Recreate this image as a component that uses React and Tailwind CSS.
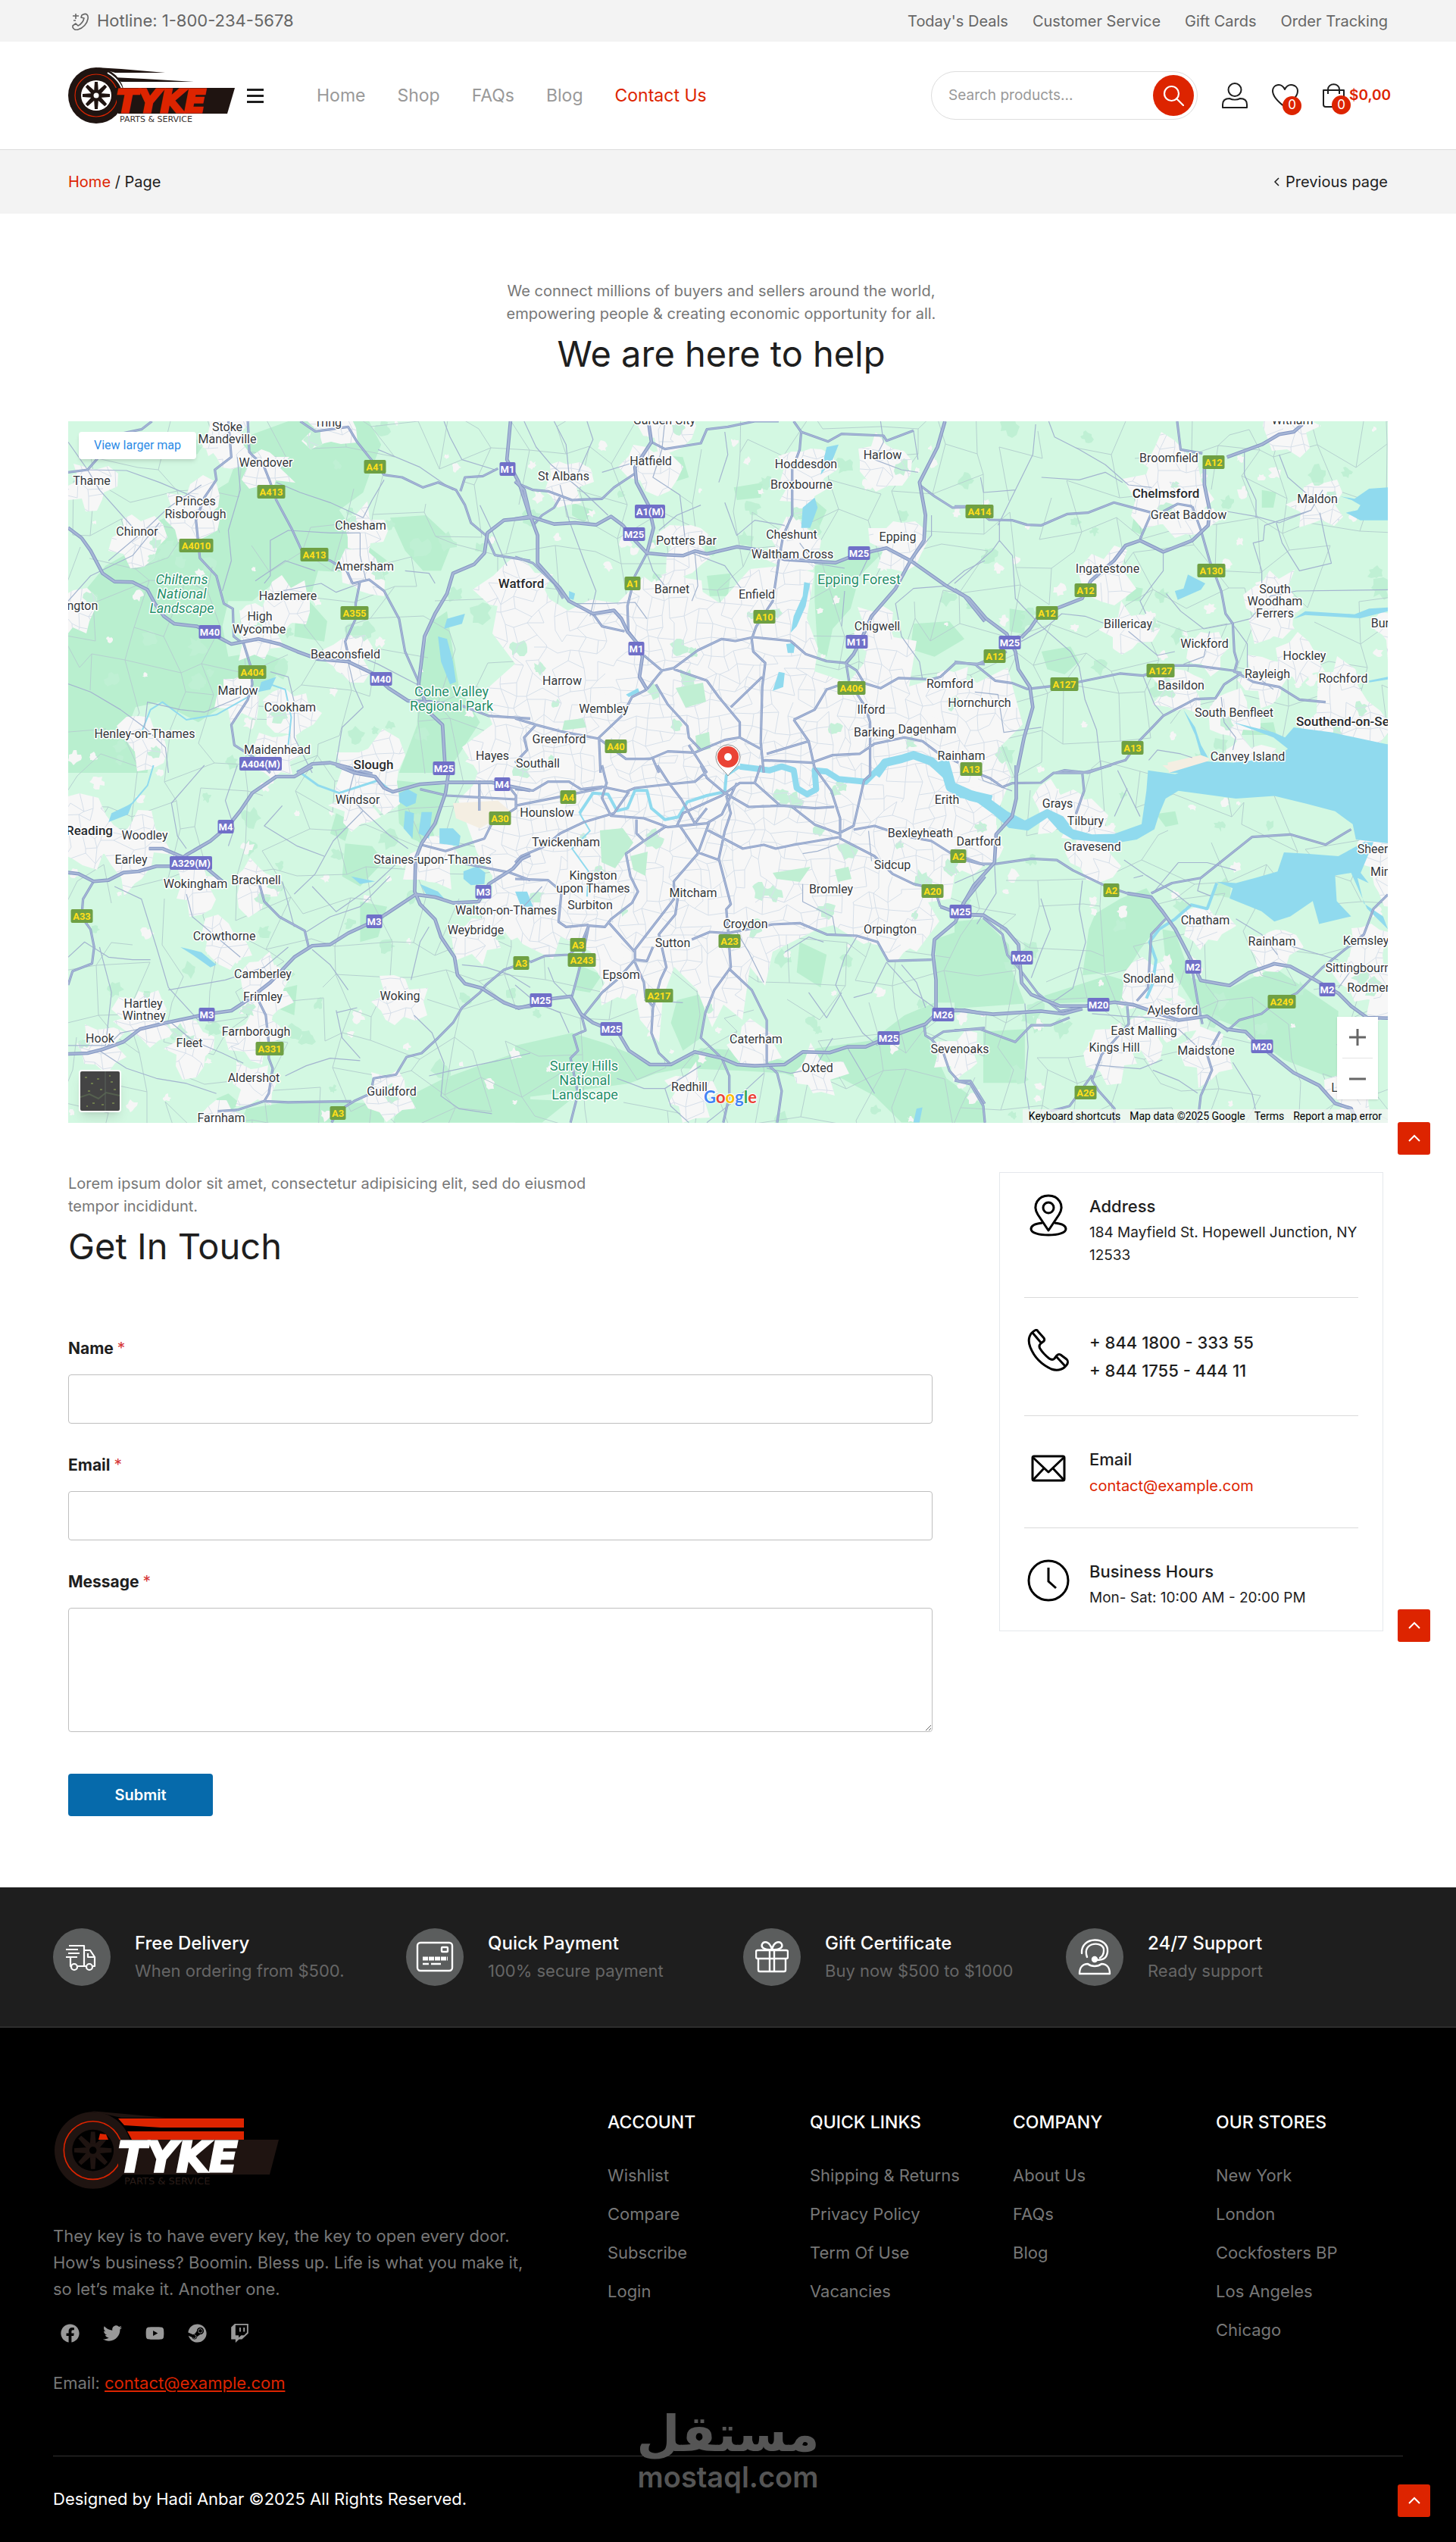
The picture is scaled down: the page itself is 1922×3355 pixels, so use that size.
import { Fragment } from "react";
import { FaFacebook, FaTwitter, FaYoutube, FaSteam, FaTwitch } from "react-icons/fa";

const topLinks = ["Today's Deals", "Customer Service", "Gift Cards", "Order Tracking"];
const navLinks = ["Home", "Shop", "FAQs", "Blog", "Contact Us"];

const footerColumns = [
  { title: "ACCOUNT", links: ["Wishlist", "Compare", "Subscribe", "Login"] },
  { title: "QUICK LINKS", links: ["Shipping & Returns", "Privacy Policy", "Term Of Use", "Vacancies"] },
  { title: "COMPANY", links: ["About Us", "FAQs", "Blog"] },
  { title: "OUR STORES", links: ["New York", "London", "Cockfosters BP", "Los Angeles", "Chicago"] },
];

const socials = [
  ["Facebook", FaFacebook],
  ["Twitter", FaTwitter],
  ["YouTube", FaYoutube],
  ["Steam", FaSteam],
  ["Twitch", FaTwitch],
];

/* ---------- map data ---------- */

// every tile has its own origin and units, the map itself is 1742 x 926
const tiles = {
  a: { x: -10, y: -16, sx: 0.3954, sy: 0.3333 },
  b: { x: 590, y: -16, sx: 0.3954, sy: 0.3333 },
  c: { x: 1170, y: -16, sx: 0.3827, sy: 0.3333 },
  d: { x: -10, y: 454, sx: 0.3954, sy: 0.3333 },
  e: { x: 590, y: 454, sx: 0.3954, sy: 0.3333 },
  f: { x: 1170, y: 454, sx: 0.4222, sy: 0.3381 },
};

const hills = {
  a: "M330,440L420,390L560,290L600,160L640,100L760,48L1030,48L1070,140L1040,230L1010,330L930,400L1000,520L1090,600L1000,650L860,640L830,760L890,840L880,920L780,900L790,720L700,700L640,760L560,760L540,860L560,980L660,960L760,1000L700,1080L560,1160L460,1240L330,1160L250,1180L230,1240L250,1320L130,1290L25,1340V800L150,620L240,560ZM1100,430L1220,420L1310,520L1270,640L1210,640L1150,560ZM1240,840L1290,800L1310,960L1330,1100L1400,1240L1290,1440H1130L1190,1250L1200,1000ZM25,1250L160,1300L300,1330L290,1440H25Z",
  b: "M1000,620L1190,570L1230,565L1150,660L1120,790L1060,870L1040,980L1010,960L1000,760ZM980,340L1040,400L1010,480L960,480ZM460,180L560,190L580,270L500,300ZM1330,850L1450,840L1500,910L1400,980L1320,950ZM730,310L830,290L820,350L740,360ZM640,660L720,650L710,740L650,740ZM190,370L260,400L230,450L190,420ZM540,1120L620,1110L640,1170L570,1180Z",
  c: "M620,420L680,430L650,500L610,480ZM190,790L250,800L240,890L190,880ZM1060,320L1110,330L1100,390L1060,390ZM300,960L400,940L430,1000L380,1050L320,1030ZM600,700L650,710L640,760L590,760ZM960,1250L1100,1240L1110,1290L990,1290Z",
  d: "M1120,60L1290,80L1260,230L1210,320L1130,230ZM950,310L1040,320L1080,380L1000,480L940,440ZM920,190L970,220L950,300L900,270ZM1000,540L1090,560L1060,680L1000,700ZM1110,1415L1130,1330L1280,1240L1420,1180L1568,1120V1415ZM620,1360L780,1330L1080,1340V1415H600ZM720,890L790,870L780,990L720,960ZM520,1320L560,1300L600,1340L540,1390ZM1160,190L1220,170L1260,330L1170,290Z",
  e: "M0,1110L190,1060L300,1100L380,1140L450,1190L560,1170L620,1120L760,1130L900,1170L1010,1120L1190,1090L1300,990L1400,940L1370,1060L1440,1240L1568,1350V1415H1290L1200,1310L1090,1240L990,1260L900,1220L760,1210L560,1200L470,1220L380,1260L200,1290L0,1320ZM1400,690L1568,620V940L1410,940ZM280,260L350,250L390,300L330,400L290,380ZM385,360L440,340L430,430L395,410ZM210,790L290,830L250,900L200,890ZM540,930L640,900L620,1080L560,1130L520,1020ZM950,700L1040,750L1020,880L940,820ZM0,1320L180,1330L90,1415H0ZM630,560L680,580L670,660L630,650Z",
  f: "M0,610L90,600L170,700L180,800L220,930L0,950ZM440,580L520,520L600,480L660,590L580,720L540,800L400,820L420,640ZM650,640L690,650L740,830L860,870L1000,790L1200,960L1195,1230L1030,1150L900,1030L760,960L660,760ZM90,1040L220,1030V1240L90,1240ZM280,900L480,820L560,850L560,920L300,930ZM630,190L690,180L700,230L660,240ZM0,40L60,30L110,80L90,130L0,90Z",
};

const water = {
  a: "M1290,830L1350,810L1340,850L1280,870ZM1260,900L1290,910L1310,1000L1320,1080L1300,1090L1270,1000ZM670,1080L720,1060L700,1110L660,1120Z",
  b: "M965,685L985,690L970,780L940,860L920,885L930,820L960,740ZM960,390L1000,350L1010,390L985,470L955,470ZM880,1040L900,1045L895,1100L860,1115ZM905,930L935,925L930,965L910,965ZM1040,150L1080,140L1060,200L1020,260L1030,200ZM180,720L200,730L195,755L180,750ZM370,1130L410,1105L415,1120L380,1140Z",
  c: "M1330,345L1380,355L1430,315L1495,310V440H1400L1350,410L1390,400L1400,380L1370,360ZM1170,830L1210,800L1380,812L1430,790L1495,785V800L1400,828L1210,815ZM805,655L865,690L850,715L770,755L760,720L790,710ZM1170,1260L1300,1280L1495,1328V1440H740L870,1395L960,1400L1110,1380L1150,1345L1100,1300L960,1240L1100,1280L1140,1300ZM1430,1075L1495,1060V1070L1430,1082ZM790,1190L830,1260L850,1330L875,1380L850,1370L830,1290Z",
  d: "M1130,110L1160,95L1190,115L1185,150L1155,165L1130,145ZM1205,185L1240,185L1230,290L1195,270ZM1150,180L1180,190L1175,290L1145,250ZM1265,250L1310,250L1335,280L1330,320L1265,310ZM1345,420L1390,400L1418,425L1415,470L1370,475L1345,450ZM170,190L240,150L225,195L160,225ZM400,720L470,740L520,790L500,800L440,750ZM1200,470L1260,500L1290,540L1220,510ZM970,440L1050,460L1000,470Z",
  e: "M0,500L40,500L50,530L60,560L20,560ZM1340,1360L1360,1355L1350,1415H1330Z",
  f: "M605,20L690,35L760,0H1355V305L1255,290L1245,230L1190,180L1100,150L1000,120L880,130L810,118L700,100L660,130L640,190L625,250L570,290L500,305L370,290L330,260L290,205L230,255L170,245L120,190L60,135L0,125V92L60,100L110,130L165,180L220,215L290,170L340,200L370,250L430,270L500,268L585,230L600,100ZM820,455L880,460L940,440L1010,415L1030,340L1100,345L1200,355L1280,300H1310L1270,420L1295,460L1260,440L1280,540L1340,590L1355,640L1290,560L1240,420L1190,430L1195,530L1240,590L1140,620L1120,530L1050,590L1000,610L960,570L860,520L870,480Z",
};

const rivers = {
  a: [["M270,1280L300,1190L340,1160L420,1230L520,1210L640,1130L700,1090L750,1110L770,1220L760,1330", 2]],
  d: [["M790,20L860,80L930,110L1060,60L1110,110", 3], ["M170,210L240,150L290,80L310,0", 2]],
  e: [
    ["M215,190L260,110L310,115L340,180L375,170L400,100L440,100L455,170L500,215L545,205L575,145L640,120L700,105L705,40L750,5", 4],
    ["M215,190L250,260L190,330L245,420L240,520", 2],
    ["M750,5L850,20L890,5L930,20L940,90L975,115L1005,95L1000,20L1040,25L1080,55L1170,65L1225,0", 8],
    ["M1430,-20L1455,85L1520,120L1590,140", 14],
  ],
  b: [["M1205,1450L1235,1400L1290,1385L1330,1370L1390,1395L1440,1450", 11]],
  f: [["M820,460L790,560L740,545L690,600L640,640L610,690L630,760L620,850L600,910", 4]],
};

const sand = {
  c: "M735,1400L850,1370L880,1385L860,1410L800,1440H740Z",
  d: "M1310,150L1460,140L1500,180L1400,250L1320,210Z",
  f: "M650,0H760L720,28L670,20Z",
};

const motorways = {
  a: "M25,470L70,510L100,560L140,650L180,683L240,685L290,715L315,770L345,820L380,850L455,860L530,905L570,930L660,910L730,930L790,960L860,990L960,1000L1040,1045L1095,1105L1160,1155L1240,1160M1502,48L1490,200L1530,290L1560,400L1568,430L1480,440L1425,490L1415,570L1380,615L1310,650L1290,730L1250,810L1215,900L1195,1090L1230,1200L1275,1250L1285,1440M790,1440L840,1405L900,1400L980,1425L1040,1445",
  b: "M0,285L30,320L50,420L75,500L75,610L150,710L180,760L260,810L330,797L355,830L375,880L410,930L425,980L415,1060L440,1110M0,435L50,425L130,455L200,450L270,458L320,425L360,460L400,520L440,570L500,577L560,580L600,562L640,573L740,545L800,555L900,595L1070,608L1130,580L1240,550L1320,600L1440,700L1500,740L1568,840M445,48L455,130L400,230L405,290L445,380L462,470L440,570M1435,48L1410,150L1350,290L1370,420L1365,520L1320,600L1270,710L1190,820L1160,900L1130,970L1105,1005",
  c: "M0,715L50,750L110,830L180,890L210,960L220,1030L260,1100L270,1180L240,1300L215,1440M1200,60L1170,90L1120,100L1060,140L940,190M862,230L862,300L880,400L875,460L820,520L720,565L640,520L590,540L550,600L470,680L440,750L350,790L290,820L260,870L230,905",
  d: "M25,425L60,430L110,460L160,455L210,425L260,420L320,400L370,400L420,355L500,300L560,240L600,180L640,110L720,45L780,45L840,5M920,0L980,30L1050,45L1080,90L1110,105L1200,75L1290,68L1440,68L1568,100M25,1143L90,1140L140,1125L210,1095L265,1045L350,1020L490,985L570,972L630,925L700,860L780,760L840,715L900,710L960,665L1060,610L1130,555L1185,512L1250,522L1310,545L1395,540L1430,470L1510,410L1540,370L1568,355M1295,30L1285,110L1250,230L1205,310L1185,370L1182,500L1200,550L1250,610L1270,680L1315,760L1325,830L1350,865L1405,882L1480,940L1530,962L1568,950M295,330L340,330L400,360L480,400L540,460",
  e: "M0,960L50,955L120,925L185,915L220,985L260,1020L345,1060L380,1130L450,1185L520,1185L600,1135L690,1160L740,1185L800,1190L900,1185L960,1135L1050,1138L1110,1115L1170,1115L1240,1080L1310,1050L1370,1025L1405,985L1405,850L1395,750L1400,690L1470,620L1500,540L1568,440M1400,975L1500,970L1568,985M1420,560L1490,590L1568,595",
  f: "M193,0L193,130L180,200L130,270L125,380L60,470L0,600M540,500L615,515L650,570L690,640L740,760L770,840L860,860L920,810L1000,775L1050,785L1130,840L1200,890L1240,940L1290,985L1355,987M0,580L90,585L160,640L200,700L210,850L240,895L330,940L410,940L500,925L560,935L640,970L700,995L790,980L850,1030L910,1040L950,1090L1060,1200L1140,1250L1190,1320L1240,1340L1260,1395M0,955L120,972L270,960L340,970L400,950",
};

const mainRoads = {
  a: "M800,48L850,88L960,70L990,130L1030,190L1080,260L1140,270L1210,310L1260,290L1320,320L1350,380L1370,450L1420,500L1450,578L1568,600M625,48L630,170L680,230L700,290L720,360L770,470L805,560L900,600L955,640L975,690L1030,675L1080,720L1130,830L1150,960L1195,1080M560,48L570,190L515,240L520,280L480,350L452,440L465,590L520,660L545,770L575,790L578,900L600,920M610,925L635,1020L640,1090L625,1150L570,1250L580,1330L640,1375L700,1440M1000,680L985,770L985,830L950,920L965,1000M305,48L270,80L190,100L120,200L90,240L25,250M1240,1160L1330,1170L1430,1215L1568,1225M1335,325L1350,270L1410,265L1460,235",
  b: "M0,290L60,320L110,325L190,360L290,355L330,310L400,255M455,130L500,158L620,135L640,80L710,70L800,48L880,48M930,48L955,90L1045,128L1090,98L1230,105L1240,125L1330,85M955,90L950,160L925,240L925,420L895,500L880,600L860,760L805,860L790,910L795,960L835,1005L825,1100L820,1320L830,1440M440,570L400,660L375,780L378,880L410,930M1350,300L1400,345L1460,390L1568,385M440,1110L490,1035L530,1025L610,955L690,910L735,918L795,903L920,918L970,970L1040,998L1100,1005L1140,1035L1165,1085L1220,1105L1280,1065L1390,1070L1420,1060L1470,1005L1568,1010M1105,1005L1115,1080L1170,1180L1185,1240L1185,1440M430,975L490,1035M440,1110L390,1140L360,1210L280,1300L285,1440M530,1030L640,1075L680,1140L750,1240L750,1300M470,1090L510,1170L575,1255L580,1300L620,1350M0,1225L70,1250L150,1275L280,1305L370,1385L450,1385L510,1355L600,1360L700,1310L750,1300L820,1345M830,1390L990,1400L1060,1370L1150,1365L1200,1325L1300,1300L1360,1315L1410,1360L1480,1400M720,1180L825,1060M930,1230L1000,1190L1040,1110L1090,1090M930,1230L980,1315L1000,1420M840,1365L980,1315M460,1385L480,1440M70,1250L30,1300L40,1350L0,1400M0,585L60,610L130,690L160,750M260,810L290,860L365,880M60,460L90,420L130,390L150,350M580,1330L640,1440",
  c: "M180,960L75,1012L0,1000M768,48L780,160L855,175M820,385L850,480L880,600L920,720L935,810L960,850L965,960L975,1000L965,1040L990,1045M0,385L60,385L120,438L200,440L250,458L300,460L390,415L460,410L550,370L680,410L640,515M720,405L770,375L820,385M75,1015L140,1075L200,1085L250,1108L330,1098L430,1080L570,1047L650,1055L760,1015L830,1015L960,1035L1030,1080L1120,1100L1190,1150L1280,1160M350,1440L380,1430L460,1440L560,1400L590,1390L640,1310L720,1215L830,1148L900,1145L930,1090L990,1045",
  d: "M110,460L75,530L70,600L100,650L112,720L105,785L40,815L25,870M665,475L680,540L730,600L815,655L828,720M905,1415L925,1370L980,1330L1035,1300L1045,1240L1120,1225L1155,1155L1205,1140L1260,1080L1310,1020L1340,960L1400,900L1420,870L1480,810L1568,775M590,1365L680,1330L760,1335L970,1330M660,930L685,990L695,1100L695,1160L708,1200L695,1300L680,1330M525,1370L590,1365M1205,315L1285,340L1415,290L1440,230L1520,170L1520,120L1500,90M1200,95L1290,120L1520,135M1398,60L1398,180M1350,390L1500,425L1568,455",
  e: "M0,95L60,100L110,65L180,65L220,95L290,85L370,105L400,90L515,75L600,65L640,25M0,160L150,125L290,90M0,385L20,360L100,320L150,270L230,225L330,190L380,105M290,0L305,70L290,130L320,200L430,210L510,245L640,230L690,195L740,70M50,780L100,755L180,750L220,710L245,635L300,640L320,610L390,545L410,500L385,440L370,350L430,300L500,245M405,215L405,270L430,300M245,640L225,760L190,915M0,450L110,455L155,500L145,620L170,640L245,632M705,120L720,190L700,260L680,370L720,550L705,570L710,640L720,800L665,890L635,980L620,1080L690,1160L715,1230L715,1310L695,1415M718,810L790,890L840,1010L840,1180L875,1220L890,1290L875,1415M610,350L530,460L530,530L400,730L400,770L340,850L290,900L230,990M310,620L400,740M545,510L535,590L480,670L505,800L485,850L460,960L455,1060L480,1140L520,1185M400,770L440,775L460,720M400,780L430,860L435,920L460,955M550,240L610,345L680,375M640,255L760,330L830,315L870,330L930,315L1080,285M700,110L780,165L890,160L1000,170L1065,165M925,165L1000,235L1080,270L1130,240L1165,60L1185,40L1185,0M1000,10L1055,100L1085,210L1085,290L1200,360L1260,430L1330,470L1400,490L1420,560M1130,255L1200,240L1300,280L1390,300L1450,345L1568,395M1365,1025L1370,1070L1390,1085L1430,1140L1450,1210L1480,1250L1520,1250L1568,1340M1390,1085L1430,1055L1568,1040M590,690L650,660L710,665L860,630L950,625L1040,670L1140,675L1210,700L1245,775L1390,770M475,0L510,65L555,135L600,230L640,170M620,0L640,50L700,110M800,70L885,160M820,0L800,70L750,70L690,120L560,190L540,240M220,985L235,1050L195,1070L210,1130L185,1160L210,1300L185,1415M610,350L650,220",
  f: "M0,360L80,385L130,385L240,365L320,370L370,410L470,470L540,500M90,595L150,660L165,740L200,790L260,890L330,960L390,945M0,1035L80,1030L190,1080L240,1015L300,1015L360,985M850,1040L890,995L960,970L1000,930L1070,890L1150,790L1280,660L1310,560L1355,505M70,30L110,50L150,85L180,70L270,68L310,30L400,30L490,0M400,35L405,100L380,190M660,600L615,660L605,870L570,920M745,810L760,920L775,1010M830,1040L790,1130L805,1190L770,1290L760,1395M540,940L545,1010L460,1130L430,1230L450,1270L500,1340V1395M0,1230L50,1245L90,1330L95,1395M430,1210L360,1330L300,1350M615,500L680,460L770,440L930,280L1050,270L1160,310L1240,250",
};

const backRoads = {
  a: "M25,130L90,240L130,320L250,480M90,240L220,243L330,290L450,350M160,600L280,480L360,390L470,300M25,760L100,660L240,580L330,450M25,1088L100,1120L200,1190L280,1260L350,1340L360,1440M280,1260L290,1160L400,1190L480,1200L600,1140M540,720L570,600L560,480L600,320L590,190M680,690L700,660L700,520L760,480L900,490L1000,490M720,290L800,330L900,370L1010,430M1010,430L1040,360L1080,280M1000,490L1000,580L1020,680M740,720L870,690L920,725L1000,690M1150,640L1230,650L1250,690M700,1040L760,1060L780,1160L780,1300L840,1440M960,1000L980,1100L1010,1180L940,1260L920,1400M850,640L750,600L650,680M1190,1090L1060,1010L1020,990M1060,160L1200,230L1310,320M1280,48L1300,110L1340,200L1450,240M1400,380L1440,480L1490,620",
  b: "M30,48L70,150L120,220L230,330L310,420M130,48L170,140L180,260M240,48L260,120L200,280M150,300L180,440L230,600L270,720L250,820M500,48L490,160L460,270L550,340L570,540M600,570L610,700L590,760M440,570L460,640L500,700M590,570L700,620L760,720M700,370L740,500L800,440L900,460M620,380L540,420L480,480M1220,48L1230,130L1200,200L1290,240L1345,250M1330,85L1345,200M1150,660L1190,560M1100,720L1090,860M1320,600L1390,500L1390,420M1440,700L1330,710L1270,770L1290,900L1350,1000L1360,1070M1440,700L1500,640L1568,600M950,530L1000,610L1100,630M290,250L400,210M680,290L710,180L700,90M200,770L300,770L400,765L440,830",
  c: "M325,48L345,110L430,160L520,220L600,300L680,310M155,440L155,520L200,580L210,750L300,860L400,960L430,1020L450,1150L490,1270L505,1420M0,690L90,600L130,560L155,520M600,880L700,975L760,960M1270,320L1230,400L1070,460L1065,520L1030,530L1060,640L1060,700M940,405L1040,425L1120,450L1230,400M1260,410L1280,520L1300,610L1190,640L1130,530L1110,450M730,730L780,800L860,870L950,850L1020,830L1090,740L1180,720L1495,715M880,880L860,980L790,1010M650,1055L690,1170L720,1210M920,1140L930,1240L970,1300L960,1350M670,1390L700,1350L780,1365L820,1380M70,1120L150,1130L170,1280L300,1260M230,920L310,870L370,810L450,820L520,850M90,270L100,330L210,320L270,180L280,60M210,320L150,460M300,270L430,280L520,250L580,290M720,560L720,640L640,760L660,810M1000,170L1000,260L1040,360L1040,430M1120,180L1150,270L1230,350M965,860L1010,930L1010,1030L1100,1110",
  d: "M25,760L80,700L160,760L240,770L300,770M180,480L270,530L320,720L360,880L460,1010M360,890L550,850L680,800L760,720M480,0L370,150L390,280L420,330M590,0L550,140L580,250L560,320M740,160L680,240L790,320L880,360M1010,180L910,300L850,430L780,510M1010,180L1100,280L1160,330M980,30L960,120L1010,180M740,460L780,640M840,480L920,580L1040,480L1130,380M840,730L900,790L960,890M820,660L900,600L1000,560L1100,440M420,510L440,600L540,700L600,760M370,1020L440,1090L540,1140L610,1180M130,1130L220,1200L320,1240L420,1260L520,1300M920,970L940,1080L1000,1160M920,980L990,960M750,1230L820,1190L900,1160L1000,1170M1230,1230L1300,1210L1460,1170L1568,1140M1180,990L1240,1060L1280,1180L1270,1310L1330,1360L1440,1380M1170,850L1200,700L1230,640M1340,790L1420,800L1500,830L1568,880M140,1130L200,1060L360,1020M20,1110L150,1110L170,900L130,720",
  e: "M110,800L130,860L180,920M0,870L70,940L150,980L180,1060M340,1240L430,1280L500,1280L620,1190M500,1280L520,1350L580,1415M740,660L780,740L830,860M900,740L980,680L1030,700M1140,680L1100,760L1070,870L1110,960L1160,1060L1210,1110M1240,780L1190,900L1130,920M980,900L1040,1000L1090,900M840,1200L920,1220L1000,1200L1060,1080M430,930L560,940M960,350L1010,340L1080,310M960,470L960,540L1060,600L1070,670M1240,780L1330,900L1400,960M1290,790L1340,860L1370,960M1180,260L1190,380M20,570L90,480M1200,1300L1150,1200L1110,1120M640,1415L720,1340L830,1220",
  f: "M400,450L390,560L410,690L370,870L300,930M270,520L300,640L270,730L240,830M530,370L600,430L690,500L740,550M620,500L700,380L790,380L880,410M560,440L590,430M125,380L130,500L70,620M770,440L760,490L800,510M0,460L110,400M430,970L530,980L620,985L690,1000M440,1170L580,1185L650,1150M620,1190L700,1230L760,1280M220,930L230,1100L220,1240L240,1395M870,1160L930,1280L950,1395M1050,705L1200,760M640,1020L700,1030L760,1100M880,600L960,660L1010,740M180,100L90,60L70,0M540,90L500,200M430,200L420,260M510,20L580,200M1200,870L1240,800",
};

const townLabels = [
  ["a", "Stoke", 556, 70], ["a", "Mandeville", 557, 118], ["a", "Wendover", 686, 209], ["a", "Thame", 103, 281],
  ["a", "Princes", 450, 364], ["a", "Risborough", 450, 413], ["a", "Chinnor", 255, 483], ["a", "Tring", 893, 50],
  ["a", "Chesham", 1002, 459], ["a", "Amersham", 1014, 622], ["a", "Hazlemere", 758, 737], ["a", "Watlington", 28, 776],
  ["a", "High", 664, 820], ["a", "Wycombe", 663, 869], ["a", "Beaconsfield", 952, 970], ["a", "Marlow", 593, 1114],
  ["a", "Cookham", 766, 1179], ["a", "Henley-on-Thames", 281, 1285], ["a", "Maidenhead", 724, 1348], ["a", "Hayes", 1441, 1371],
  ["b", "Garden City", 497, 42], ["b", "Hatfield", 452, 203], ["b", "St Albans", 162, 263], ["b", "Hoddesdon", 972, 217],
  ["b", "Broxbourne", 957, 297], ["b", "Harlow", 1226, 181], ["b", "Potters Bar", 571, 520], ["b", "Cheshunt", 922, 496],
  ["b", "Waltham Cross", 925, 573], ["b", "Epping", 1278, 504], ["b", "Barnet", 523, 711], ["b", "Enfield", 808, 733],
  ["b", "Chigwell", 1208, 857], ["b", "Harrow", 157, 1074], ["b", "Wembley", 297, 1186], ["b", "Greenford", 147, 1305],
  ["b", "Southall", 75, 1401], ["b", "Romford", 1452, 1087], ["b", "Hornchurch", 1551, 1161], ["b", "Ilford", 1188, 1189],
  ["b", "Barking", 1199, 1277], ["b", "Dagenham", 1377, 1265], ["b", "Rainham", 1490, 1370],
  ["c", "Witham", 1165, 42], ["c", "Broomfield", 739, 191], ["c", "Great Baddow", 808, 416], ["c", "Maldon", 1252, 353],
  ["c", "Ingatestone", 527, 630], ["c", "South", 1105, 710], ["c", "Woodham", 1105, 759], ["c", "Ferrers", 1105, 808],
  ["c", "Burnham", 1520, 846], ["c", "Billericay", 599, 849], ["c", "Wickford", 863, 927], ["c", "Hockley", 1208, 974],
  ["c", "Rayleigh", 1080, 1046], ["c", "Rochford", 1341, 1065], ["c", "Basildon", 782, 1093], ["c", "South Benfleet", 965, 1201],
  ["c", "Canvey Island", 1012, 1373],
  ["d", "Woodley", 280, 275], ["d", "Windsor", 992, 136], ["d", "Earley", 234, 373], ["d", "Wokingham", 450, 469],
  ["d", "Bracknell", 653, 452], ["d", "Crowthorne", 547, 674], ["d", "Staines-upon-Thames", 1243, 371], ["d", "Walton-on-Thames", 1488, 573],
  ["d", "Weybridge", 1387, 652], ["d", "Camberley", 676, 825], ["d", "Frimley", 675, 915], ["d", "Hartley", 276, 941],
  ["d", "Wintney", 278, 990], ["d", "Hook", 131, 1080], ["d", "Fleet", 430, 1097], ["d", "Farnborough", 653, 1053],
  ["d", "Woking", 1132, 911], ["d", "Aldershot", 645, 1235], ["d", "Guildford", 1106, 1291], ["d", "Farnham", 537, 1394],
  ["e", "Hounslow", 106, 186], ["e", "Twickenham", 170, 304], ["e", "Kingston", 261, 436], ["e", "upon Thames", 260, 485],
  ["e", "Surbiton", 251, 551], ["e", "Mitcham", 594, 504], ["e", "Bromley", 1055, 489], ["e", "Sidcup", 1260, 394],
  ["e", "Bexleyheath", 1352, 268], ["e", "Erith", 1442, 136], ["e", "Croydon", 770, 628], ["e", "Sutton", 526, 701],
  ["e", "Orpington", 1251, 647], ["e", "Epsom", 353, 827], ["e", "Caterham", 805, 1083], ["e", "Oxted", 1009, 1198],
  ["e", "Sevenoaks", 1484, 1121], ["e", "Redhill", 582, 1272],
  ["f", "Dartford", 75, 296], ["f", "Grays", 321, 147], ["f", "Tilbury", 409, 217], ["f", "Gravesend", 432, 316],
  ["f", "Sheerness", 1348, 324], ["f", "Minster", 1365, 413], ["f", "Chatham", 785, 602], ["f", "Rainham", 993, 686],
  ["f", "Kemsley", 1285, 682], ["f", "Sittingbourne", 1273, 789], ["f", "Rodmersham", 1341, 868], ["f", "Snodland", 606, 830],
  ["f", "Aylesford", 682, 956], ["f", "East Malling", 593, 1035], ["f", "Kings Hill", 500, 1099], ["f", "Maidstone", 787, 1113],
  ["f", "Lenham", 1246, 1258],
];

const cityLabels = [
  ["a", "Slough", 1045, 1406], ["a", "Watford", 1538, 690], ["c", "Chelmsford", 730, 334],
  ["c", "Southend-on-Sea", 1350, 1237], ["d", "Reading", 97, 257],
];

const parkLabels = [
  ["a", "Chilterns", 405, 675, true], ["a", "National", 405, 731, true], ["a", "Landscape", 405, 789, true],
  ["a", "Colne Valley", 1306, 1120], ["a", "Regional Park", 1306, 1177], ["b", "Epping Forest", 1147, 674],
  ["e", "Surrey Hills", 230, 1190], ["e", "National", 232, 1247], ["e", "Landscape", 232, 1304],
];

const shields = [
  ["a", "A41", 1049, 229], ["a", "M1", 1491, 236], ["a", "A413", 704, 328], ["a", "A4010", 453, 541], ["a", "A413", 848, 577],
  ["a", "A355", 982, 808], ["a", "M40", 497, 881], ["a", "A404", 640, 1042], ["a", "M40", 1070, 1068], ["a", "A404(M)", 668, 1405],
  ["a", "M25", 1280, 1422], ["b", "A1(M)", 451, 406], ["b", "M25", 398, 496], ["b", "M25", 1148, 569], ["b", "A1", 391, 689],
  ["b", "A10", 832, 821], ["b", "M1", 404, 948], ["b", "M11", 1141, 922], ["b", "A406", 1124, 1105], ["b", "A40", 337, 1335],
  ["c", "A12", 893, 210], ["c", "A414", 87, 405], ["c", "A130", 886, 638], ["c", "A12", 453, 717], ["c", "A12", 318, 808],
  ["c", "M25", 190, 923], ["c", "A12", 138, 979], ["c", "A127", 711, 1034], ["c", "A127", 379, 1090], ["c", "A13", 614, 1342],
  ["c", "A13", 58, 1426], ["d", "M4", 551, 242], ["d", "M4", 1475, 76], ["d", "A30", 1466, 209], ["d", "A329(M)", 436, 386],
  ["d", "A33", 70, 598], ["d", "M3", 1412, 500], ["d", "M3", 1047, 618], ["d", "A3", 1537, 782], ["d", "M3", 489, 986],
  ["d", "A331", 699, 1121], ["d", "A3", 925, 1378], ["e", "A4", 176, 126], ["e", "A3", 210, 711], ["e", "A243", 223, 772],
  ["e", "A23", 715, 695], ["e", "M25", 86, 931], ["e", "M25", 322, 1043], ["e", "A217", 481, 911], ["e", "A2", 1480, 359],
  ["e", "A20", 1393, 499], ["e", "M25", 1487, 578], ["e", "M26", 1430, 988], ["e", "M25", 1246, 1080], ["f", "A2", 490, 487],
  ["f", "M20", 211, 750], ["f", "M2", 747, 787], ["f", "M20", 451, 934], ["f", "A249", 1024, 922], ["f", "M2", 1165, 875],
  ["f", "M20", 961, 1096], ["f", "A26", 409, 1278],
];

const londonArea =
  "M575,200L620,225L660,250L690,235L725,240L760,205L800,235L830,220L860,240L900,195L950,190L985,200L975,260L990,300L985,330L1030,345L1050,320L1060,280L1120,290L1110,350L1160,335L1180,355L1240,325L1260,400L1230,430L1245,470L1225,520L1225,560L1170,600L1165,630L1135,635L1150,660L1120,700L1080,680L1050,690L1010,665L990,670L930,700L920,745L900,720L890,790L865,770L850,800L830,750L800,720L785,760L780,820L755,790L745,740L715,750L700,730L690,700L650,680L640,710L600,690L560,640L560,600L540,570L515,500L545,470L520,430L560,400L545,360L590,320L560,280Z";

function place([tile, , x, y]) {
  const t = tiles[tile];
  return [Math.round(t.x + x * t.sx), Math.round(t.y + y * t.sy)];
}

function makeRandom(seed) {
  let s = seed;
  return () => {
    s = (s * 16807) % 2147483647;
    return s / 2147483647;
  };
}

// loose street grid: jittered nodes joined to the right and down
function streetGrid(step, keep, seed) {
  const rand = makeRandom(seed);
  const cols = Math.ceil(1742 / step) + 2;
  const rows = Math.ceil(926 / step) + 2;
  const nodes = [];
  for (let r = 0; r < rows; r++) {
    for (let c = 0; c < cols; c++) {
      nodes.push([Math.round((c - 0.5 + rand() * 0.9) * step), Math.round((r - 0.5 + rand() * 0.9) * step)]);
    }
  }
  let d = "";
  for (let r = 0; r < rows - 1; r++) {
    for (let c = 0; c < cols - 1; c++) {
      const p = nodes[r * cols + c];
      const right = nodes[r * cols + c + 1];
      const down = nodes[(r + 1) * cols + c];
      if (rand() < keep) d += `M${p}L${right}`;
      if (rand() < keep) d += `M${p}L${down}`;
    }
  }
  return d;
}

function blob(x, y, size, rand) {
  const points = [];
  for (let i = 0; i < 14; i++) {
    const angle = (i / 14) * Math.PI * 2;
    const radius = size * (0.5 + rand() * 0.7);
    points.push(`${Math.round(x + Math.cos(angle) * radius)},${Math.round(y + Math.sin(angle) * radius)}`);
  }
  return `M${points.join("L")}Z`;
}

const blobRandom = makeRandom(77);
const townArea = [...townLabels, ...cityLabels]
  .map((label) => {
    const [x, y] = place(label);
    return blob(x, y + 8, cityLabels.includes(label) ? 56 : 36, blobRandom);
  })
  .join("");

const copses = Array.from({ length: 190 }, () => blob(blobRandom() * 1742, blobRandom() * 926, 5 + blobRandom() * 9, blobRandom)).join("");
const fields = Array.from({ length: 190 }, () => blob(blobRandom() * 1742, blobRandom() * 926, 3 + blobRandom() * 6, blobRandom)).join("");
const lanes = streetGrid(46, 0.6, 11);
const streets = streetGrid(17, 0.78, 5);

function TileLayer({ paths, ...props }) {
  return Object.entries(paths).map(([key, d]) => {
    const t = tiles[key];
    return <path key={key} d={d} transform={`translate(${t.x} ${t.y}) scale(${t.sx} ${t.sy})`} vectorEffect="non-scaling-stroke" {...props} />;
  });
}

function MapLabels({ labels, ...props }) {
  return labels.map((label) => {
    const [x, y] = place(label);
    return (
      <text key={label[1] + x} x={x} y={y + 6} textAnchor="middle" fontStyle={label[4] ? "italic" : "normal"} stroke="#fff" strokeWidth="3" strokeLinejoin="round" paintOrder="stroke" {...props}>
        {label[1]}
      </text>
    );
  });
}

function StreetMap() {
  return (
    <svg className="block w-full font-[Roboto,sans-serif]" viewBox="0 0 1742 926" role="img" aria-label="Map of London">
      <clipPath id="urban">
        <path d={londonArea + townArea} />
      </clipPath>
      <rect width="1742" height="926" fill="#d3f8e2" />
      <TileLayer paths={hills} fill="#b9efcf" />
      <path d={copses} fill="#bff0d4" />
      <path d={fields} fill="#f6f6f6" />
      <path d={lanes} fill="none" stroke="#b5d0cf" strokeWidth="1" />
      <path d={londonArea} fill="#f7f7f7" />
      <path d={townArea} fill="#f7f7f7" />
      <g clipPath="url(#urban)">
        <path d={copses} fill="#c6f1d9" />
        <path d={streets} fill="none" stroke="#d6dfe9" strokeWidth="1" />
      </g>
      <path d="M702,540L732,537L746,556L722,590L704,582ZM742,574L765,568L762,600L746,592ZM802,352L838,345L842,370L815,378ZM828,415L846,410L848,432L830,436ZM930,596L980,588L966,608L935,604ZM1012,592L1030,588L1034,604L1016,608ZM655,395L680,392L684,404L652,408Z" fill="#c0efd3" />
      <TileLayer paths={sand} fill="#f4eee2" />
      <TileLayer paths={water} fill="#90daee" />
      {Object.entries(rivers).map(([key, list]) =>
        list.map(([d, width]) => <TileLayer key={d} paths={{ [key]: d }} fill="none" stroke="#90daee" strokeWidth={width} strokeLinejoin="round" />)
      )}
      <TileLayer paths={backRoads} fill="none" stroke="#a3b4cf" strokeWidth="1.2" strokeLinejoin="round" />
      <TileLayer paths={mainRoads} fill="none" stroke="#8b9ec6" strokeWidth="3.2" strokeLinejoin="round" />
      <TileLayer paths={mainRoads} fill="none" stroke="#a6b6d6" strokeWidth="1.6" strokeLinejoin="round" />
      <TileLayer paths={motorways} fill="none" stroke="#8395c2" strokeWidth="4.6" strokeLinejoin="round" />
      <TileLayer paths={motorways} fill="none" stroke="#a6b6d6" strokeWidth="2.6" strokeLinejoin="round" />
      <MapLabels labels={parkLabels} fontSize="18" fill="#24906a" />
      <MapLabels labels={townLabels} fontSize="16" fill="#33373b" />
      <MapLabels labels={cityLabels} fontSize="17" fontWeight="500" fill="#26292c" />
      {shields.map((shield) => {
        const [x, y] = place(shield);
        const motorway = shield[1].includes("M");
        const width = shield[1].length * 8 + (shield[1].includes("(") ? 0 : 5);
        return (
          <g key={`${shield[1]}-${x}-${y}`}>
            <rect x={x - width / 2} y={y - 9} width={width} height="18" rx="2" fill={motorway ? "#7070c8" : "#6fa043"} />
            <text x={x} y={y + 5} textAnchor="middle" fontSize="13" fontWeight="700" fill={motorway ? "#fff" : "#ffdf1b"}>
              {shield[1]}
            </text>
          </g>
        );
      })}
      <path d="M871,468C866,460 855,455 855,443A16,16 0 1 1 887,443C887,455 876,460 871,468Z" fill="#fff" stroke="#8d8d8d" strokeWidth="1" />
      <circle cx="871" cy="443" r="14" fill="#ea4335" />
      <circle cx="871" cy="443" r="5" fill="#fff" />
      <text x="874" y="900" textAnchor="middle" fontFamily="Lato, sans-serif" fontSize="22" fontWeight="700" stroke="#fff" strokeWidth="2" paintOrder="stroke">
        <tspan fill="#4285f4">G</tspan>
        <tspan fill="#ea4335">o</tspan>
        <tspan fill="#fbbc05">o</tspan>
        <tspan fill="#4285f4">g</tspan>
        <tspan fill="#34a853">l</tspan>
        <tspan fill="#ea4335">e</tspan>
      </text>
    </svg>
  );
}

/* ---------- logo and icons ---------- */

function Wheel({ rim, spoke }) {
  return (
    <g>
      <circle cx="37" cy="38" r="37" fill="#1f1411" />
      <circle cx="37" cy="38" r="28" fill="none" stroke="#dd2400" strokeWidth="1.2" />
      <circle cx="37" cy="38" r="20" fill={rim} />
      {[0, 45, 90, 135, 180, 225, 270, 315].map((angle) => (
        <path key={angle} d="M34,34L35,20H39L40,34Z" fill={spoke} transform={`rotate(${angle} 37 38)`} />
      ))}
      <circle cx="37" cy="38" r="7" fill={spoke} />
      <circle cx="37" cy="38" r="3.5" fill={rim} />
    </g>
  );
}

function Logo() {
  return (
    <svg className="h-[76px] w-[222px] shrink-0" viewBox="0 0 222 76" role="img" aria-label="Tyke Parts and Service">
      <path d="M37,1L70,3L128,8L62,8ZM58,14L100,16L166,20L70,20Z" fill="#1f1411" />
      <Wheel rim="#fff" spoke="#1f1411" />
      <path d="M52,8C66,16 73,28 74,42" fill="none" stroke="#fff" strokeWidth="2" />
      <path d="M62,28H220L210,62H66Z" fill="#1f1411" />
      <text x="64" y="60" fontFamily="DejaVu Sans, sans-serif" fontSize="41" fontWeight="700" fontStyle="italic" fill="#dd2400" stroke="#dd2400" strokeWidth="3">
        TYKE
      </text>
      <text x="68" y="73" fontFamily="DejaVu Sans, sans-serif" fontSize="11" fill="#3b3330">
        PARTS &amp; SERVICE
      </text>
    </svg>
  );
}

function FooterLogo() {
  return (
    <svg className="h-[104px] w-[302px]" viewBox="0 0 302 104" role="img" aria-label="Tyke Parts and Service">
      <path d="M50,0L150,9H90Z" fill="#1f1411" />
      <path d="M86,10H252V22H142L94,19Z" fill="#dd2400" />
      <path d="M98,27H252V38H104Z" fill="#dd2400" />
      <g transform="translate(2 0) scale(1.37)">
        <Wheel rim="#000" spoke="#1f1411" />
      </g>
      <path d="M62,30L70,31L73,38H60Z" fill="#dd2400" />
      <path d="M86,38H298L286,84H86Z" fill="#1f1411" />
      <text x="86" y="80" fontFamily="DejaVu Sans, sans-serif" fontSize="55" fontWeight="700" fontStyle="italic" fill="#fff" stroke="#fff" strokeWidth="3">
        TYKE
      </text>
      <text x="94" y="97" fontFamily="DejaVu Sans, sans-serif" fontSize="13" fill="#2a1d19">
        PARTS &amp; SERVICE
      </text>
    </svg>
  );
}

function PinIcon() {
  return (
    <svg className="size-14" viewBox="0 0 56 56" fill="none" stroke="#000" strokeWidth="3">
      <path d="M28,48L14,27C6,14 15,2 28,2S50,14 42,27Z" strokeLinejoin="round" />
      <circle cx="28" cy="18" r="7" />
      <path d="M20,38C10,39 5,42 5,46C5,51 15,54 28,54S51,51 51,46C51,42 46,39 36,38" />
    </svg>
  );
}

function PhoneIcon() {
  return (
    <svg className="size-14" viewBox="0 0 56 56" fill="none" stroke="#000" strokeWidth="3" strokeLinejoin="round">
      <path d="M10,2C3,6 0,14 4,24C9,37 19,47 32,53C41,56 49,53 53,46C54,43 54,42 52,40L44,34C42,33 40,34 39,35L36,39C34,41 32,41 29,39C24,35 20,31 17,26C15,23 16,21 18,19L22,16C23,15 23,14 22,12L14,3C13,1 12,1 10,2Z" />
      <path d="M7,5L18,18M38,36L50,49" />
    </svg>
  );
}

function MailIcon() {
  return (
    <svg className="size-14" viewBox="0 0 56 56" fill="none" stroke="#000" strokeWidth="3" strokeLinejoin="round">
      <rect x="7" y="12" width="42" height="32" rx="2" />
      <path d="M8,14L28,33L48,14M8,43L22,28M48,43L34,28" />
    </svg>
  );
}

function ClockIcon() {
  return (
    <svg className="size-14" viewBox="0 0 56 56" fill="none" stroke="#000" strokeWidth="3">
      <circle cx="28" cy="28" r="26" />
      <path d="M28,11V29L38,38" />
    </svg>
  );
}

function TruckIcon() {
  return (
    <svg className="size-11" viewBox="0 0 44 44" fill="none" stroke="#fff" strokeWidth="2.2" strokeLinejoin="round">
      <path d="M5,7H25V34H16M7,22V34H9M25,13H33L39,22V34H36M25,34H28M30,17V22H38" />
      <circle cx="12" cy="35" r="4" />
      <circle cx="32" cy="35" r="4" />
      <path d="M1,12H17M4,17H19M1,22H16" />
    </svg>
  );
}

function CardIcon() {
  return (
    <svg className="h-11 w-[50px]" viewBox="0 0 50 44" fill="none" stroke="#fff" strokeWidth="2.4">
      <rect x="2" y="3" width="46" height="37" rx="4" />
      <rect x="34" y="9" width="8" height="6" rx="1" />
      <path d="M9,24H42" strokeWidth="5" strokeDasharray="7 1" />
      <path d="M9,31H17M20,31H33" />
    </svg>
  );
}

function GiftIcon() {
  return (
    <svg className="size-11" viewBox="0 0 44 44" fill="none" stroke="#fff" strokeWidth="2.4" strokeLinejoin="round">
      <rect x="1" y="13" width="42" height="11" rx="2" />
      <path d="M4,24V39Q4,41 6,41H38Q40,41 40,39V24M19,13V41M25,13V41" />
      <path d="M22,12C14,13 7,10 9,5C11,1 19,0 22,12C25,0 33,1 35,5C37,10 30,13 22,12Z" />
    </svg>
  );
}

function SupportIcon() {
  return (
    <svg className="h-12 w-11" viewBox="0 0 44 48" fill="none" stroke="#fff" strokeWidth="2.4" strokeLinecap="round" strokeLinejoin="round">
      <path d="M5,19C3,-4 41,-4 39,17C38,25 34,28 24,28" />
      <path d="M12,24C4,3 36,2 34,16C34,20 32,23 29,25" />
      <circle cx="22" cy="27" r="3" fill="#fff" />
      <path d="M2,46C2,38 6,33 13,33C18,37 26,37 31,33C38,33 42,38 42,46Z" />
    </svg>
  );
}

const contacts = [
  {
    Icon: PinIcon,
    body: (
      <>
        <h3 className="text-[22px] leading-8 font-medium">Address</h3>
        <p className="mt-1 text-[19px] leading-[30px]">
          184 Mayfield St. Hopewell Junction, NY
          <br />
          12533
        </p>
      </>
    ),
  },
  {
    Icon: PhoneIcon,
    body: (
      <p className="text-[22px] leading-[37px] font-medium">
        + 844 1800 - 333 55
        <br />
        + 844 1755 - 444 11
      </p>
    ),
  },
  {
    Icon: MailIcon,
    body: (
      <>
        <h3 className="text-[22px] leading-8 font-medium">Email</h3>
        <a className="mt-1 block text-[20px] leading-[30px] text-[#dd2400]" href="mailto:contact@example.com">
          contact@example.com
        </a>
      </>
    ),
  },
  {
    Icon: ClockIcon,
    body: (
      <>
        <h3 className="text-[22px] leading-8 font-medium">Business Hours</h3>
        <p className="mt-1 text-[19px] leading-[30px]">Mon- Sat: 10:00 AM - 20:00 PM</p>
      </>
    ),
  },
];

const features = [
  { Icon: TruckIcon, title: "Free Delivery", text: "When ordering from $500." },
  { Icon: CardIcon, title: "Quick Payment", text: "100% secure payment" },
  { Icon: GiftIcon, title: "Gift Certificate", text: "Buy now $500 to $1000" },
  { Icon: SupportIcon, title: "24/7 Support", text: "Ready support" },
];

function BackToTop({ className }) {
  return (
    <button type="button" aria-label="Back to top" className={`absolute flex size-[43px] items-center justify-center rounded-[3px] bg-[#dd2400] ${className}`}>
      <svg className="h-3 w-4" viewBox="0 0 16 12" fill="none" stroke="#fff" strokeWidth="2">
        <path d="M1,9L8,2L15,9" />
      </svg>
    </button>
  );
}

function Header() {
  return (
    <header>
      <div className="flex h-[55px] items-center justify-between bg-[#f3f3f3] px-[90px] text-[#666]">
        <div className="flex items-center gap-2.5 pl-1 text-[22px]">
          <svg className="h-6 w-6" viewBox="0 0 24 24" fill="none" stroke="#666" strokeWidth="1.6" strokeLinejoin="round">
            <path d="M16,3C20,1 23,4 22,9C21,15 16,21 9,23C6,24 3,23 2,20L2,18L6,15L9,18C13,16 16,12 17,8L13,7L14,4Z" />
            <path d="M6,2V9M2,5H10M3,11H6" />
          </svg>
          Hotline: 1-800-234-5678
        </div>
        <nav className="flex gap-8 text-[20px]">
          {topLinks.map((link) => (
            <a key={link} href="#top">
              {link}
            </a>
          ))}
        </nav>
      </div>

      <div className="flex h-[143px] items-center border-b border-[#dcdcdc] px-[90px]">
        <Logo />
        <button type="button" aria-label="Menu" className="ml-3.5 flex w-[22px] flex-col gap-[5px]">
          <span className="h-[3px] bg-[#1e1e1e]" />
          <span className="h-[3px] bg-[#1e1e1e]" />
          <span className="h-[3px] bg-[#1e1e1e]" />
        </button>
        <nav className="ml-[70px] flex gap-[42px] text-[23px] text-[#999]">
          {navLinks.map((link) => (
            <a key={link} href="#nav" className={link === "Contact Us" ? "text-[#dd2400]" : ""}>
              {link}
            </a>
          ))}
        </nav>
        <form className="ml-auto flex h-16 w-[352px] items-center rounded-full border border-[#ddd] pr-1 pl-[22px]">
          <input aria-label="Search products" placeholder="Search products..." className="min-w-0 flex-1 bg-transparent text-[19px] outline-none placeholder:text-[#999]" />
          <button type="button" aria-label="Search" className="flex size-[54px] shrink-0 items-center justify-center rounded-full bg-[#dd2400]">
            <svg className="size-7" viewBox="0 0 28 28" fill="none" stroke="#fff" strokeWidth="2.2" strokeLinecap="round">
              <circle cx="11.5" cy="11.5" r="9.5" />
              <path d="M18,18L27,27" />
            </svg>
          </button>
        </form>
        <a href="#account" aria-label="Account" className="ml-8">
          <svg className="size-[34px]" viewBox="0 0 34 34" fill="none" stroke="#1e1e1e" strokeWidth="2" strokeLinejoin="round">
            <circle cx="17" cy="9.5" r="8.5" />
            <path d="M1,33V29C1,24 4,21 10,21C14,23 20,23 24,21C30,21 33,24 33,29V33Z" />
          </svg>
        </a>
        <a href="#wishlist" aria-label="Wishlist" className="relative ml-8">
          <svg className="size-[35px]" viewBox="0 0 35 35" fill="none" stroke="#1e1e1e" strokeWidth="2" strokeLinejoin="round">
            <path d="M17,32C9,26 1,19 1,11C1,3 12,-1 17,9C22,-1 34,3 34,11C34,19 25,26 17,32Z" />
          </svg>
          <span className="absolute -right-1 -bottom-2 flex size-[25px] items-center justify-center rounded-full bg-[#dd2400] text-[17px] text-white">0</span>
        </a>
        <a href="#cart" className="relative -mr-1 ml-8 flex items-center gap-1.5 text-[19px] font-semibold text-[#dd2400]">
          <svg className="h-8 w-[29px]" viewBox="0 0 29 32" fill="none" stroke="#1e1e1e" strokeWidth="2" strokeLinejoin="round">
            <path d="M1,9H28V28Q28,31 25,31H4Q1,31 1,28ZM7,14V8C7,-1 22,-1 22,8V14" />
          </svg>
          <span className="absolute top-4 left-3 flex size-[25px] items-center justify-center rounded-full bg-[#dd2400] text-[17px] font-normal text-white">0</span>
          $0,00
        </a>
      </div>

      <div className="flex h-[84px] items-center justify-between bg-[#f3f3f3] px-[90px] text-[20px] text-[#1e1e1e]">
        <p>
          <a className="text-[#dd2400]" href="#home">
            Home
          </a>{" "}
          / Page
        </p>
        <a className="flex items-center gap-2" href="#previous">
          <svg className="h-3 w-2" viewBox="0 0 8 12" fill="none" stroke="#1e1e1e" strokeWidth="1.5">
            <path d="M7,1L2,6L7,11" />
          </svg>
          Previous page
        </a>
      </div>
    </header>
  );
}

function MapPanel() {
  return (
    <div className="relative mt-[61px] overflow-hidden font-[Roboto,sans-serif]">
      <StreetMap />
      <a href="#map" className="absolute top-[14px] left-[14px] flex h-9 items-center rounded-sm bg-white px-5 text-base text-[#2b8be6] shadow-md">
        View larger map
      </a>
      <button type="button" aria-label="Satellite view" className="absolute bottom-[14px] left-[14px] size-14 rounded-sm border-2 border-white bg-[#444] shadow-lg">
        <svg className="size-full" viewBox="0 0 52 52" fill="none">
          <path d="M0,34L12,30L24,36L34,28L52,32" stroke="#55604f" strokeWidth="2" />
          <path d="M33,0V52" stroke="#59635a" />
          <path d="M6,8H9M14,16H17M22,10H25M40,14H43M10,26H13M26,24H29M44,24H47M16,42H19M28,44H31M42,42H45M8,46H10M38,6H40" stroke="#6d7a4d" strokeWidth="2" />
        </svg>
      </button>
      <div className="absolute right-[13px] bottom-[31px] flex w-[54px] flex-col items-center bg-white shadow">
        <button type="button" aria-label="Zoom in" className="flex h-[54px] w-full items-center justify-center">
          <svg className="size-[22px]" viewBox="0 0 22 22" stroke="#666" strokeWidth="3">
            <path d="M0,11H22M11,0V22" />
          </svg>
        </button>
        <span className="h-px w-10 bg-[#e3e3e3]" />
        <button type="button" aria-label="Zoom out" className="flex h-[54px] w-full items-center justify-center">
          <svg className="size-[22px]" viewBox="0 0 22 22" stroke="#666" strokeWidth="3">
            <path d="M0,11H22" />
          </svg>
        </button>
      </div>
      <div className="absolute right-0 bottom-0 flex gap-3 bg-[#f5f5f5]/70 px-2 text-[14px] leading-[18px] text-black">
        <button type="button">Keyboard shortcuts</button>
        <span>Map data ©2025 Google</span>
        <a href="#terms">Terms</a>
        <a href="#report">Report a map error</a>
      </div>
    </div>
  );
}

function ContactForm() {
  const label = "block text-[21px] leading-[30px] font-bold";
  const field = "mt-[19px] block w-full rounded-[4px] border border-[#bfbfbf] bg-white px-4 text-[20px]";
  return (
    <form>
      <p className="text-[20px] leading-[30px] text-[#777]">
        Lorem ipsum dolor sit amet, consectetur adipisicing elit, sed do eiusmod
        <br />
        tempor incididunt.
      </p>
      <h2 className="mt-2.5 text-[47px] leading-[56px]">Get In Touch</h2>
      <label className={`${label} mt-[92px]`} htmlFor="name">
        Name <span className="font-normal text-[#d63637]">*</span>
      </label>
      <input id="name" type="text" className={`${field} h-[65px]`} />
      <label className={`${label} mt-10`} htmlFor="email">
        Email <span className="font-normal text-[#d63637]">*</span>
      </label>
      <input id="email" type="email" className={`${field} h-[65px]`} />
      <label className={`${label} mt-10`} htmlFor="message">
        Message <span className="font-normal text-[#d63637]">*</span>
      </label>
      <textarea id="message" className={`${field} h-[164px] resize-y`} />
      <button type="button" className="mt-[55px] h-14 w-[191px] rounded-[4px] bg-[#066aab] text-[20px] font-semibold text-white">
        Submit
      </button>
    </form>
  );
}

function ContactCard() {
  return (
    <aside className="self-start border border-[#e5e8ec] px-8 pt-7 pb-7">
      {contacts.map(({ Icon, body }, i) => (
        <Fragment key={i}>
          {i > 0 && <hr className="mt-10 mb-[41px] border-[#dadada]" />}
          <div className="flex items-start gap-[26px] pl-1">
            <Icon />
            <div className="min-w-0 flex-1">{body}</div>
          </div>
        </Fragment>
      ))}
    </aside>
  );
}

function Footer() {
  return (
    <footer className="bg-black text-[#777]">
      <div className="border-b border-[#444] bg-[#1e1e1e] px-[70px] py-[54px]">
        <div className="grid grid-cols-[466fr_445fr_426fr_445fr]">
          {features.map(({ Icon, title, text }) => (
            <div key={title} className="flex items-center gap-8">
              <div className="flex size-[76px] shrink-0 items-center justify-center rounded-full bg-[#5b5d5d]">
                <Icon />
              </div>
              <div>
                <h3 className="text-[24px] leading-9 font-medium text-white">{title}</h3>
                <p className="text-[22px] leading-9 text-[#666]">{text}</p>
              </div>
            </div>
          ))}
        </div>
      </div>

      <div className="px-[70px]">
        <div className="grid grid-cols-[732fr_267fr_268fr_268fr_247fr] pt-[110px] pb-[81px]">
          <div>
            <FooterLogo />
            <p className="mt-11 text-[22px] leading-[35px]">
              They key is to have every key, the key to open every door.
              <br />
              How’s business? Boomin. Bless up. Life is what you make it,
              <br />
              so let’s make it. Another one.
            </p>
            <div className="mt-7 flex gap-[31px] pl-2.5 text-[25px] text-[#999]">
              {socials.map(([name, Icon]) => (
                <a key={name} href="#social" aria-label={name}>
                  <Icon />
                </a>
              ))}
            </div>
            <p className="mt-[38px] text-[22px] leading-[30px]">
              Email:{" "}
              <a className="text-[#dd2400] underline" href="mailto:contact@example.com">
                contact@example.com
              </a>
            </p>
          </div>
          {footerColumns.map(({ title, links }) => (
            <div key={title}>
              <h3 className="text-[23px] leading-[30px] font-medium text-white">{title}</h3>
              <ul className="mt-10 flex flex-col gap-[21px] text-[22px] leading-[30px]">
                {links.map((link) => (
                  <li key={link}>
                    <a href="#footer">{link}</a>
                  </li>
                ))}
              </ul>
            </div>
          ))}
        </div>

        <div className="relative flex h-[114px] items-center border-t border-[#333]">
          <p className="text-[22px] text-white">Designed by Hadi Anbar ©2025 All Rights Reserved.</p>
          <div className="absolute -top-[62px] left-1/2 flex w-[234px] -translate-x-1/2 flex-col items-center leading-none font-bold text-[#555]">
            <span className="h-[66px] font-['DejaVu_Sans',sans-serif] text-[66px] leading-[66px]" lang="ar" dir="rtl">
              مستقل
            </span>
            <span className="text-[38px] leading-[46px] font-semibold">mostaql.com</span>
          </div>
        </div>
      </div>
    </footer>
  );
}

export default function App() {
  return (
    <div id="top" className="relative bg-white font-[Inter,sans-serif] text-[#1e1e1e]">
      <Header />
      <main className="px-[90px] pt-[87px] pb-[94px]">
        <div className="pr-[18px] text-center">
          <p className="text-[20px] leading-[30px] text-[#777]">
            We connect millions of buyers and sellers around the world,
            <br />
            empowering people &amp; creating economic opportunity for all.
          </p>
          <h1 className="mt-2.5 text-[47px] leading-[56px]">We are here to help</h1>
        </div>
        <MapPanel />
        <div className="mt-[65px] grid grid-cols-[1141fr_507fr] gap-[88px] pr-1.5">
          <ContactForm />
          <ContactCard />
        </div>
      </main>
      <Footer />
      <BackToTop className="top-[1481px] right-[34px]" />
      <BackToTop className="top-[2124px] right-[34px]" />
      <BackToTop className="right-[34px] bottom-[33px]" />
    </div>
  );
}
